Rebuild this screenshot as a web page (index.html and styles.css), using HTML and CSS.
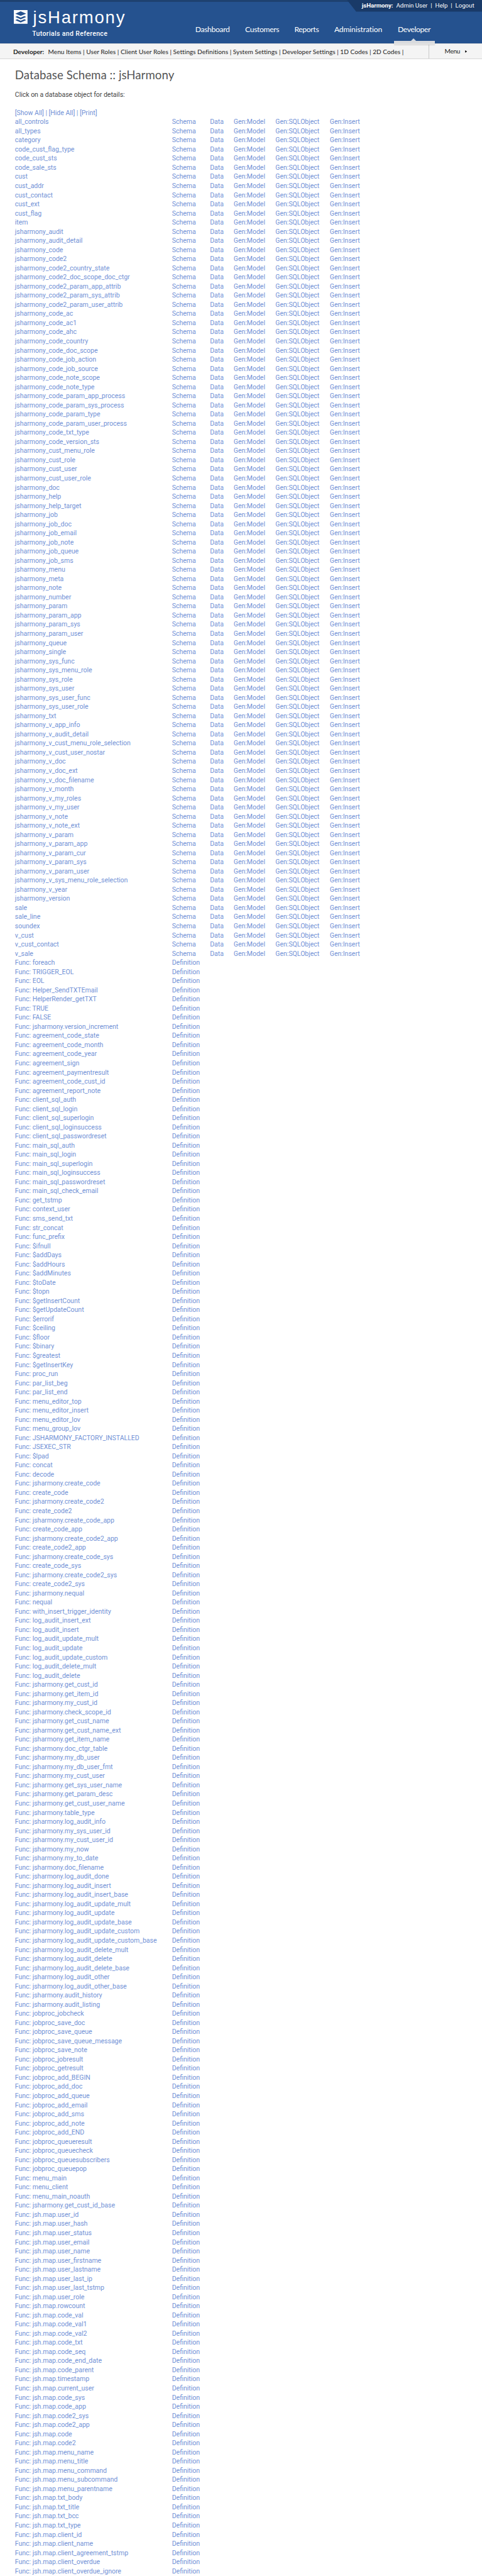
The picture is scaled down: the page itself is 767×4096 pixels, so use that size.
FILE: index.html
```html
<!DOCTYPE html>
<html lang="en">
<head>
<meta charset="utf-8">
<title>Database Schema :: jsHarmony</title>
<link rel="stylesheet" href="styles.css">
</head>
<body>
<header class="header">
  <div class="topstrip"></div>
  <div class="userbar"><b class="userbar-app">jsHarmony:</b><a>Admin User</a><i>|</i><a>Help</a><i>|</i><a>Logout</a></div>
  <div class="brand">
    <svg class="logo" viewBox="0 0 27 27"><rect width="27" height="27" fill="#fff"/><g fill="#25528f"><path d="M13.5 2.6 24.4 7.2 13.5 11.6 3 7.2Z"/><path d="M3 13.6 6.5 11.8 13.5 14.8 20.8 11.8 24.4 13.6 13.5 18.2Z"/><path d="M3 19.9 6.5 18.1 13.5 21.1 20.8 18.1 24.4 19.9 13.5 24.5Z"/></g></svg>
    <span class="brand-name">jsHarmony</span>
  </div>
  <div class="tagline">Tutorials and Reference</div>
  <nav class="nav">
    <a>Dashboard</a><a>Customers</a><a>Reports</a><a class="wide">Administration</a><a class="active">Developer</a>
  </nav>
</header>
<div class="subbar">
  <div class="crumbs"><b>Developer:</b><span>Menu Items | User Roles | Client User Roles | Settings Definitions | System Settings | Developer Settings | 1D Codes | 2D Codes |</span></div>
  <div class="menu"><span class="menu-label">Menu</span><svg class="caret" viewBox="0 0 4 4"><path d="M0 0 4 2 0 4Z" fill="#222"/></svg></div>
</div>
<main class="content">
  <h1 class="title">Database Schema :: jsHarmony</h1>
  <p class="intro">Click on a database object for details:</p>
  <div class="tools"><a>[Show All]</a> <i>|</i> <a>[Hide All]</a> <i>|</i> <a>[Print]</a></div>
  <div class="list" id="list"></div>
</main>
<script src="rows.js"></script>
</body>
</html>
```
FILE: styles.css
```css
/* 1rem = ten layout units */
html { font-size: 8.0737px; }
body { margin: 0; height: 4096px; overflow: hidden; background: #fff; font-family: Roboto, "Liberation Sans", sans-serif; }
b, i { font-style: normal; }

.header { position: relative; height: 8.6rem; background: #25528f; color: #fff; }
.topstrip { height: .4rem; background: #1e4170; }
.userbar { position: absolute; top: 0; right: 0; width: 26.6rem; height: 2.3rem; box-sizing: border-box; padding-left: 2.9rem; display: flex; align-items: center; font-size: 1.2rem; line-height: 2.2rem; background: #193a68; clip-path: polygon(0 0, 100% 0, 100% 100%, 1.8rem 100%); white-space: nowrap; }
.userbar-app { margin-right: .6rem; }
.userbar i { width: 1.5rem; text-align: center; }
.brand { display: flex; padding: 1.6rem 0 0 2.7rem; height: 3.6rem; }
.logo { width: 2.7rem; height: 2.7rem; margin-right: 1.1rem; }
.brand-name { font: 3.4rem/3.6rem "Liberation Sans", sans-serif; margin-top: -.38rem; letter-spacing: .23rem; }
.tagline { padding-left: 6.35rem; margin-top: .33rem; font-size: 1.3rem; font-weight: 500; line-height: 1.6rem; letter-spacing: .046rem; }

.nav { position: absolute; left: 38.5rem; top: 4.65rem; display: grid; grid-template-columns: 9.82rem 9.7rem 7.86rem 12.52rem 6.45rem; font: 1.5rem/2.2rem Lato, sans-serif; letter-spacing: -.042rem; white-space: nowrap; }
.nav .wide { letter-spacing: -.017rem; }
.active { position: relative; }
.active::before { content: ""; position: absolute; left: 2.6rem; top: 2.85rem; border: .6rem solid transparent; border-top: 0; border-bottom-color: #d6dae0; }
.active::after { content: ""; position: absolute; left: -.8rem; top: 3.45rem; width: 8.1rem; height: .75rem; z-index: 1; background: linear-gradient(#d9dbde 0 .5rem, #e3e3e3 .5rem); box-shadow: 0 .15rem .15rem rgba(0, 0, 0, .12); }

.subbar { display: flex; justify-content: space-between; height: 3.1rem; box-sizing: border-box; background: #f4f4f4; border-top: 1px solid #ddd; border-bottom: 1px solid #d8d8d8; font: 1.25rem/3rem Lato, sans-serif; color: #222; white-space: nowrap; }
.crumbs { padding-left: 2.6rem; display: flex; gap: .8rem; }
.crumbs span { letter-spacing: .004rem; }
.menu { width: 10.5rem; border-left: 1px solid #c8c8c8; box-sizing: border-box; padding-left: 3rem; display: flex; align-items: center; gap: .9rem; line-height: 2.7rem; }
.menu-label { letter-spacing: -.03rem; }
.caret { width: .45rem; height: .45rem; }

.content { padding-left: 2.95rem; color: #444; }
.title { margin: 0; padding-top: 1.4rem; font: 2.3rem/3.4rem Lato, sans-serif; letter-spacing: .012rem; color: #555; }
.intro { margin: 1.3rem 0 0; font-size: 1.3rem; line-height: 1.8rem; padding-bottom: 1.8rem; }
.tools, .list { color: #7191d6; font-size: 1.3rem; line-height: 1.8rem; }
.row { display: grid; grid-template-columns: 30.95rem 7.5rem 4.65rem 8.25rem 10.7rem auto; height: 1.8rem; white-space: nowrap; }
```
FILE: rows.js
```js
const tables = `all_controls all_types category code_cust_flag_type code_cust_sts code_sale_sts cust cust_addr cust_contact cust_ext cust_flag item
jsharmony_audit jsharmony_audit_detail jsharmony_code jsharmony_code2 jsharmony_code2_country_state jsharmony_code2_doc_scope_doc_ctgr
jsharmony_code2_param_app_attrib jsharmony_code2_param_sys_attrib jsharmony_code2_param_user_attrib jsharmony_code_ac jsharmony_code_ac1
jsharmony_code_ahc jsharmony_code_country jsharmony_code_doc_scope jsharmony_code_job_action jsharmony_code_job_source
jsharmony_code_note_scope jsharmony_code_note_type jsharmony_code_param_app_process jsharmony_code_param_sys_process
jsharmony_code_param_type jsharmony_code_param_user_process jsharmony_code_txt_type jsharmony_code_version_sts
jsharmony_cust_menu_role jsharmony_cust_role jsharmony_cust_user jsharmony_cust_user_role jsharmony_doc jsharmony_help
jsharmony_help_target jsharmony_job jsharmony_job_doc jsharmony_job_email jsharmony_job_note jsharmony_job_queue jsharmony_job_sms
jsharmony_menu jsharmony_meta jsharmony_note jsharmony_number jsharmony_param jsharmony_param_app jsharmony_param_sys
jsharmony_param_user jsharmony_queue jsharmony_single jsharmony_sys_func jsharmony_sys_menu_role jsharmony_sys_role
jsharmony_sys_user jsharmony_sys_user_func jsharmony_sys_user_role jsharmony_txt jsharmony_v_app_info jsharmony_v_audit_detail
jsharmony_v_cust_menu_role_selection jsharmony_v_cust_user_nostar jsharmony_v_doc jsharmony_v_doc_ext jsharmony_v_doc_filename
jsharmony_v_month jsharmony_v_my_roles jsharmony_v_my_user jsharmony_v_note jsharmony_v_note_ext jsharmony_v_param
jsharmony_v_param_app jsharmony_v_param_cur jsharmony_v_param_sys jsharmony_v_param_user jsharmony_v_sys_menu_role_selection
jsharmony_v_year jsharmony_version sale sale_line soundex v_cust v_cust_contact v_sale`.split(/\s+/);

const funcs = `foreach TRIGGER_EOL EOL Helper_SendTXTEmail HelperRender_getTXT TRUE FALSE jsharmony.version_increment
agreement_code_state agreement_code_month agreement_code_year agreement_sign agreement_paymentresult agreement_code_cust_id
agreement_report_note client_sql_auth client_sql_login client_sql_superlogin client_sql_loginsuccess client_sql_passwordreset
main_sql_auth main_sql_login main_sql_superlogin main_sql_loginsuccess main_sql_passwordreset main_sql_check_email get_tstmp
context_user sms_send_txt str_concat func_prefix $ifnull $addDays $addHours $addMinutes $toDate $topn $getInsertCount
$getUpdateCount $errorif $ceiling $floor $binary $greatest $getInsertKey proc_run par_list_beg par_list_end menu_editor_top
menu_editor_insert menu_editor_lov menu_group_lov JSHARMONY_FACTORY_INSTALLED JSEXEC_STR $lpad concat decode
jsharmony.create_code create_code jsharmony.create_code2 create_code2 jsharmony.create_code_app create_code_app
jsharmony.create_code2_app create_code2_app jsharmony.create_code_sys create_code_sys jsharmony.create_code2_sys
create_code2_sys jsharmony.nequal nequal with_insert_trigger_identity log_audit_insert_ext log_audit_insert
log_audit_update_mult log_audit_update log_audit_update_custom log_audit_delete_mult log_audit_delete jsharmony.get_cust_id
jsharmony.get_item_id jsharmony.my_cust_id jsharmony.check_scope_id jsharmony.get_cust_name jsharmony.get_cust_name_ext
jsharmony.get_item_name jsharmony.doc_ctgr_table jsharmony.my_db_user jsharmony.my_db_user_fmt jsharmony.my_cust_user
jsharmony.get_sys_user_name jsharmony.get_param_desc jsharmony.get_cust_user_name jsharmony.table_type
jsharmony.log_audit_info jsharmony.my_sys_user_id jsharmony.my_cust_user_id jsharmony.my_now jsharmony.my_to_date
jsharmony.doc_filename jsharmony.log_audit_done jsharmony.log_audit_insert jsharmony.log_audit_insert_base
jsharmony.log_audit_update_mult jsharmony.log_audit_update jsharmony.log_audit_update_base jsharmony.log_audit_update_custom
jsharmony.log_audit_update_custom_base jsharmony.log_audit_delete_mult jsharmony.log_audit_delete
jsharmony.log_audit_delete_base jsharmony.log_audit_other jsharmony.log_audit_other_base jsharmony.audit_history
jsharmony.audit_listing jobproc_jobcheck jobproc_save_doc jobproc_save_queue jobproc_save_queue_message jobproc_save_note
jobproc_jobresult jobproc_getresult jobproc_add_BEGIN jobproc_add_doc jobproc_add_queue jobproc_add_email jobproc_add_sms
jobproc_add_note jobproc_add_END jobproc_queueresult jobproc_queuecheck jobproc_queuesubscribers jobproc_queuepop
menu_main menu_client menu_main_noauth jsharmony.get_cust_id_base jsh.map.user_id jsh.map.user_hash jsh.map.user_status
jsh.map.user_email jsh.map.user_name jsh.map.user_firstname jsh.map.user_lastname jsh.map.user_last_ip
jsh.map.user_last_tstmp jsh.map.user_role jsh.map.rowcount jsh.map.code_val jsh.map.code_val1 jsh.map.code_val2
jsh.map.code_txt jsh.map.code_seq jsh.map.code_end_date jsh.map.code_parent jsh.map.timestamp jsh.map.current_user
jsh.map.code_sys jsh.map.code_app jsh.map.code2_sys jsh.map.code2_app jsh.map.code jsh.map.code2 jsh.map.menu_name
jsh.map.menu_title jsh.map.menu_command jsh.map.menu_subcommand jsh.map.menu_parentname jsh.map.txt_body jsh.map.txt_title
jsh.map.txt_bcc jsh.map.txt_type jsh.map.client_id jsh.map.client_name jsh.map.client_agreement_tstmp
jsh.map.client_overdue jsh.map.client_overdue_ignore`.split(/\s+/);

const tableLinks = ['Schema', 'Data', 'Gen:Model', 'Gen:SQLObject', 'Gen:Insert'];
const row = cells => '<div class="row">' + cells.map(c => `<a>${c}</a>`).join('') + '</div>';

document.getElementById('list').innerHTML =
  tables.map(name => row([name, ...tableLinks])).join('') +
  funcs.map(name => row(['Func: ' + name, 'Definition'])).join('');
```
